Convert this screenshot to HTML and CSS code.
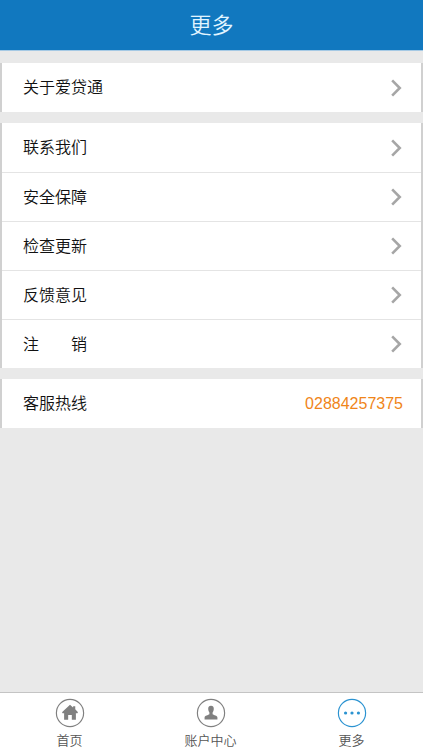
FILE: index.html
```html
<!DOCTYPE html>
<html lang="zh-CN">
<head>
  <meta charset="UTF-8" />
  <meta name="viewport" content="width=device-width, initial-scale=1.0" />
  <title>更多</title>
  <link rel="stylesheet" href="styles.css">
</head>
<body>

<header class="header">
  <h1>更多</h1>
</header>

<main class="content">
  <nav class="group">
    <a class="row" href="#about">
      <span class="label">关于爱贷通</span>
      <svg class="arrow" viewBox="0 0 12 18"><path d="M2 2l7 7-7 7" /></svg>
    </a>
  </nav>

  <nav class="group">
    <a class="row" href="#contact">
      <span class="label">联系我们</span>
      <svg class="arrow" viewBox="0 0 12 18"><path d="M2 2l7 7-7 7" /></svg>
    </a>
    <a class="row" href="#security">
      <span class="label">安全保障</span>
      <svg class="arrow" viewBox="0 0 12 18"><path d="M2 2l7 7-7 7" /></svg>
    </a>
    <a class="row" href="#update">
      <span class="label">检查更新</span>
      <svg class="arrow" viewBox="0 0 12 18"><path d="M2 2l7 7-7 7" /></svg>
    </a>
    <a class="row" href="#feedback">
      <span class="label">反馈意见</span>
      <svg class="arrow" viewBox="0 0 12 18"><path d="M2 2l7 7-7 7" /></svg>
    </a>
    <a class="row" href="#logout">
      <span class="label">注　　销</span>
      <svg class="arrow" viewBox="0 0 12 18"><path d="M2 2l7 7-7 7" /></svg>
    </a>
  </nav>

  <div class="group">
    <div class="row">
      <span class="label">客服热线</span>
      <a class="phone" href="tel:02884257375">02884257375</a>
    </div>
  </div>
</main>

<nav class="tabbar">
  <a class="tab" href="#home">
    <svg class="icon" viewBox="0 0 28 28">
      <circle cx="14" cy="14" r="12.7" />
      <path class="fill" d="M14 6.2l2.9 2.6V7.6h2v3l2.6 2.6-.9 1.2-1.1-.5v6.4h-3.8v-4.500h-3.400v4.500H8.500v-6.400l-1.100.5-.9-1.200z" />
    </svg>
    <span>首页</span>
  </a>
  <a class="tab" href="#account">
    <svg class="icon" viewBox="0 0 28 28">
      <circle cx="14" cy="14" r="12.7" />
      <path class="fill" d="M14 7.200c2.100 0 2.700 1.300 2.600 3.100-.1 1.500-.5 2.500-1.100 3.200v1.700c.9.9 4.500 1 4.500 3.100v1.800H8v-1.800c0-2.100 3.600-2.200 4.500-3.100v-1.700c-.6-.7-1-1.700-1.100-3.200-.1-1.800.5-3.100 2.600-3.100z" />
    </svg>
    <span>账户中心</span>
  </a>
  <a class="tab active" href="#more">
    <svg class="icon" viewBox="0 0 28 28">
      <circle cx="14" cy="14" r="12.7" />
      <circle class="fill" cx="8" cy="14" r="1.5" />
      <circle class="fill" cx="14" cy="14" r="1.5" />
      <circle class="fill" cx="20" cy="14" r="1.5" />
    </svg>
    <span>更多</span>
  </a>
</nav>

</body>
</html>
```
FILE: styles.css
```css
* {
  box-sizing: border-box;
}
body {
  display: flex;
  flex-direction: column;
  min-height: 100vh;
  margin: 0;
  background-color: #e9e9e9;
  color: #111;
  font-family: "Liberation Sans", "Noto Sans CJK SC", sans-serif;
  font-size: 16px;
  font-weight: 350;
}
a {
  color: inherit;
  text-decoration: none;
}
.header {
  padding-top: 2px;
  background-color: #1178bf;
  border-bottom: 1px solid #a5c9e4;
}
.header h1 {
  margin: 0;
  color: #e2f5ff;
  font-size: 22px;
  font-weight: 350;
  line-height: 48px;
  text-align: center;
}
.content {
  display: flex;
  flex: 1;
  flex-direction: column;
  gap: 11px;
  padding: 12px 0;
}
.group {
  background-color: #fff;
  border-left: 2px solid #d0d0d0;
  border-right: 2px solid #d0d0d0;
}
.row {
  display: flex;
  align-items: center;
  justify-content: space-between;
  height: 49px;
  padding: 0 18px 0 21px;
}
.row + .row {
  border-top: 1px solid #e4e4e4;
}
.label {
  padding-bottom: 3px;
}
.arrow {
  width: 13px;
  height: 20px;
  fill: none;
  stroke: #a6a6a6;
  stroke-width: 2.4;
}
.phone {
  color: #f08519;
}
.tabbar {
  display: flex;
  height: 58px;
  background-color: #fff;
  border-top: 1px solid #c4c4c4;
}
.tab {
  display: flex;
  flex: 1;
  flex-direction: column;
  align-items: center;
  gap: 1px;
  padding: 5px 2px 0 0;
  color: #555;
  font-size: 13px;
  line-height: 24px;
}
.icon {
  flex: none;
  width: 30px;
  height: 30px;
  fill: none;
  stroke: #808080;
  stroke-width: 1.1;
}
.icon .fill {
  fill: #808080;
  stroke: none;
}
.active .icon {
  stroke: #2b93d1;
}
.active .fill {
  fill: #2b93d1;
}
```
